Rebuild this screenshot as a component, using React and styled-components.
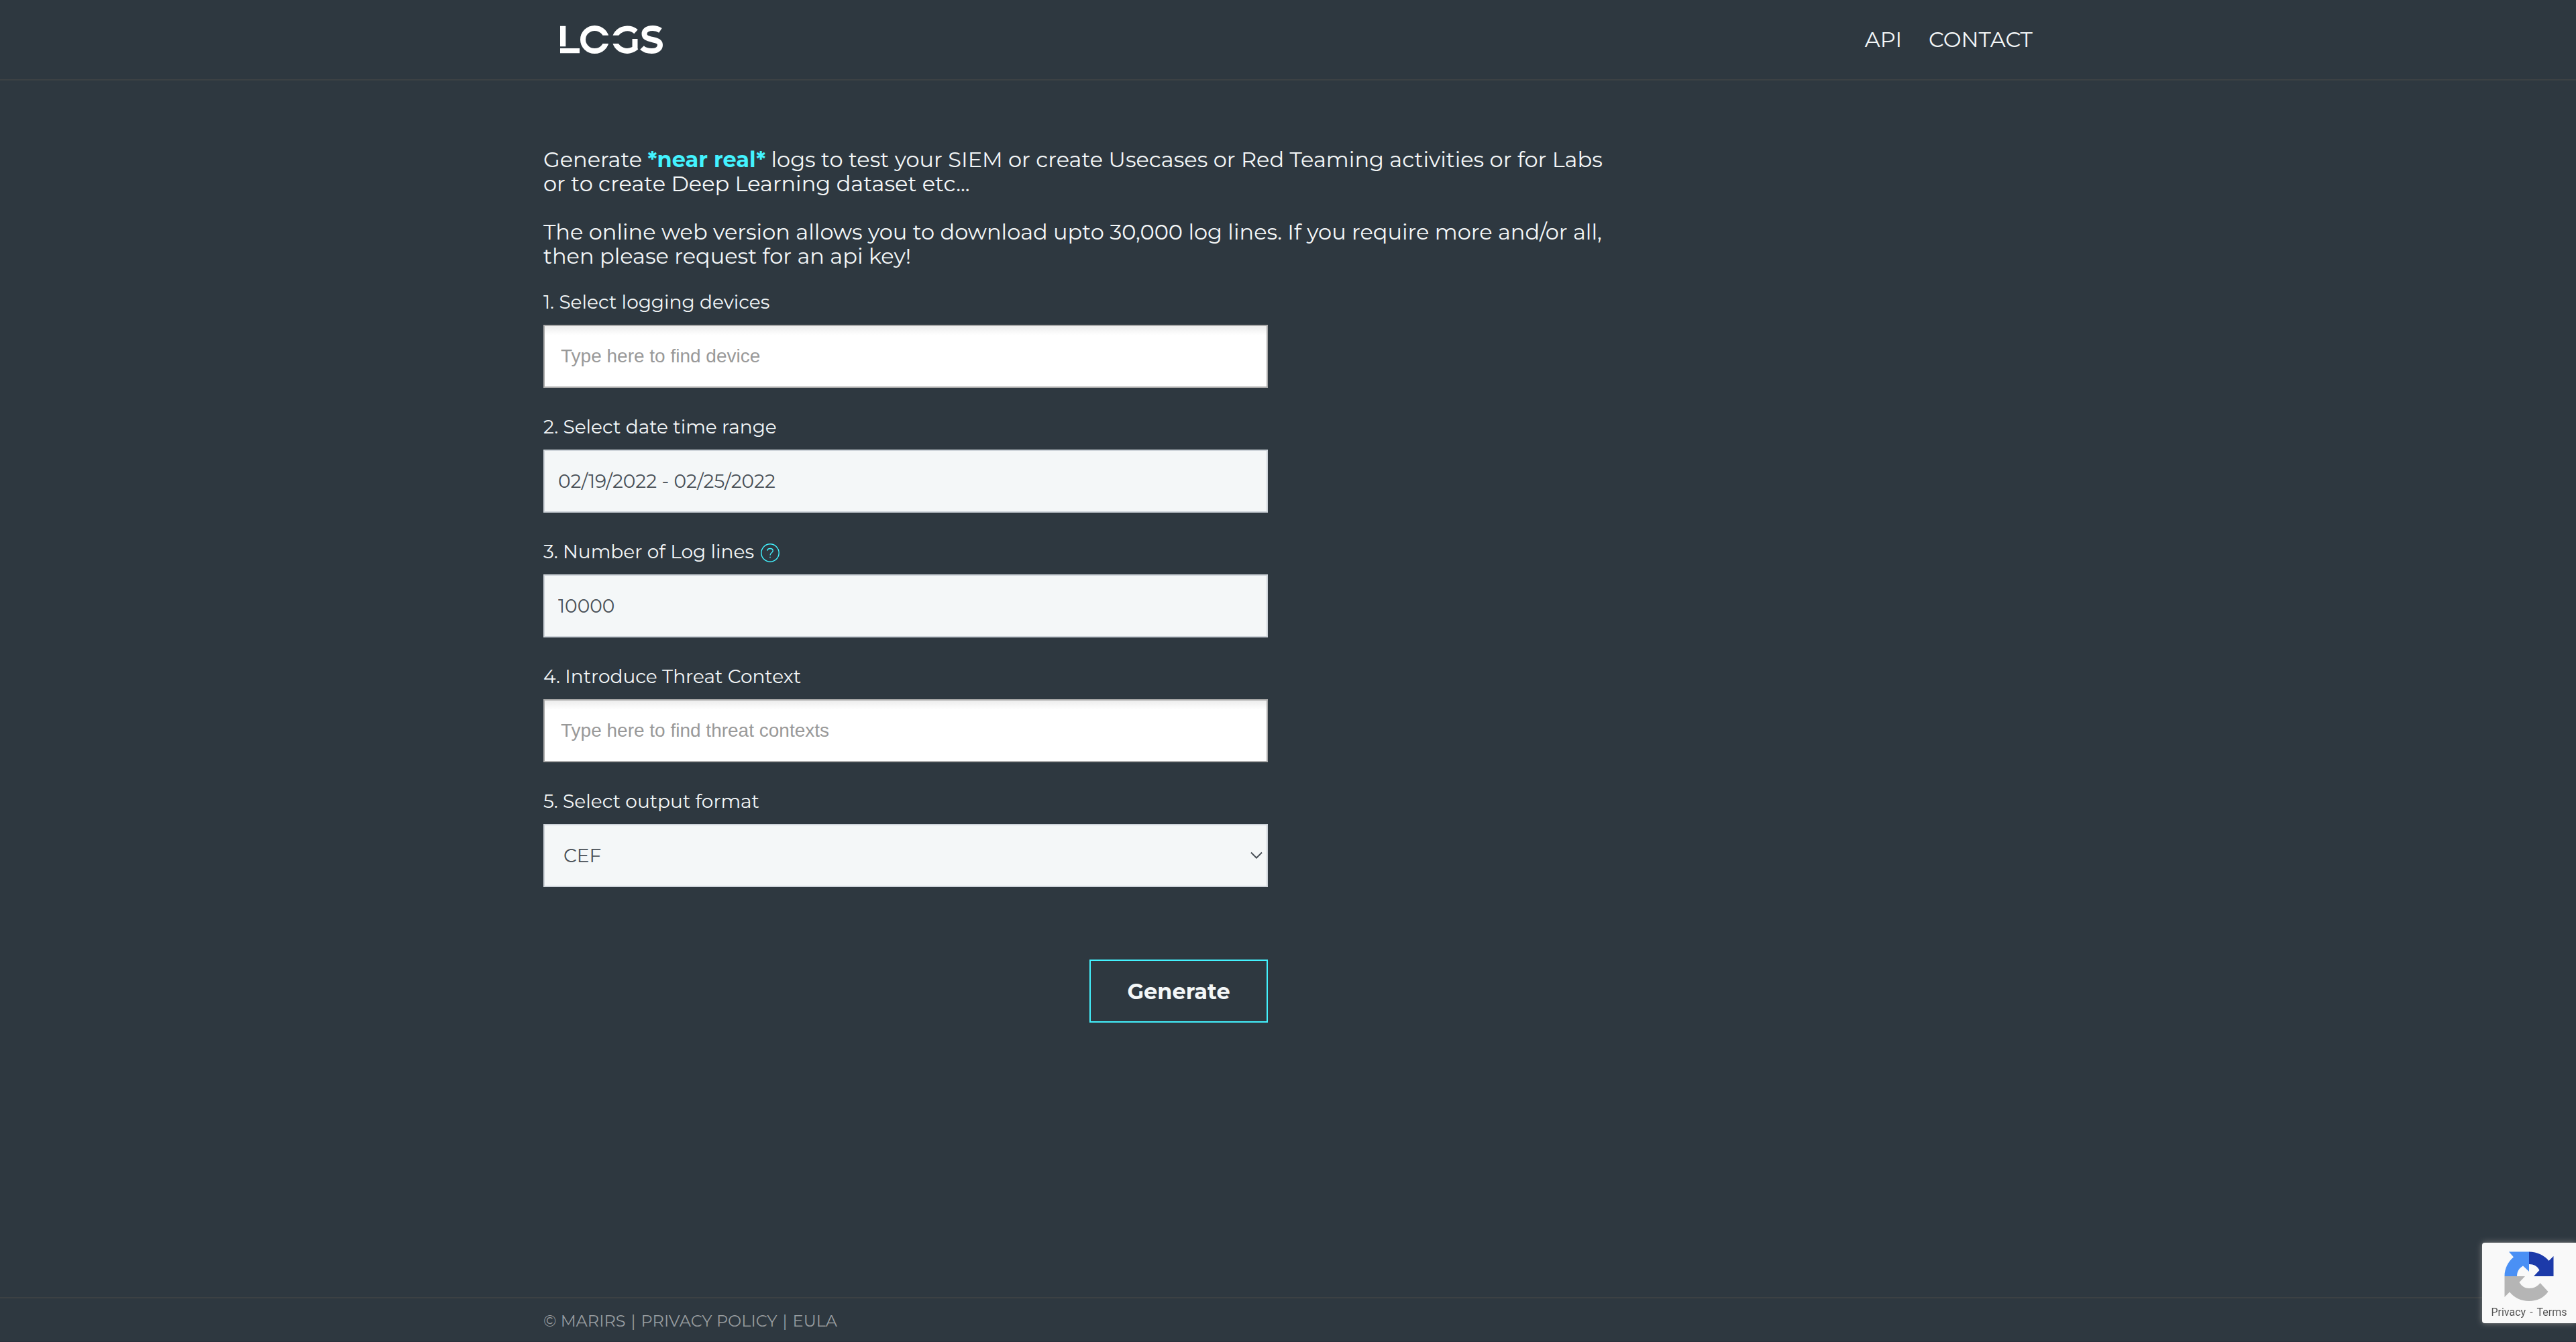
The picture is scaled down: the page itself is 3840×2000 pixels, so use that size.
import React, { useState } from "react";
import styled, { createGlobalStyle } from "styled-components";

const sans = `Montserrat, Inter, "Open Sans", sans-serif`;
const arial = `"Liberation Sans", Arial, sans-serif`;

const GlobalStyle = createGlobalStyle`
  *, *::before, *::after { box-sizing: border-box; }
  body {
    margin: 0;
    background: #2e3840;
    color: #f4f7f8;
    font-family: ${sans};
  }
`;

const Page = styled.div`
  min-height: 100vh;
  display: flex;
  flex-direction: column;
  border-bottom: 1px solid #2b303c;
`;

const Container = styled.div`
  width: 100%;
  max-width: 2280px;
  margin: 0 auto;
  padding: 0 30px;
`;

const Header = styled.header`
  border-bottom: 2px solid #3c4144;
`;

const HeaderBar = styled(Container)`
  height: 118px;
  display: flex;
  align-items: center;
  justify-content: space-between;
`;

const LogoLink = styled.a`
  display: block;
  padding-left: 24px;
  svg { display: block; }
`;

const Nav = styled.nav`
  display: flex;
  gap: 40px;
`;

const NavLink = styled.a`
  color: inherit;
  text-decoration: none;
  font-size: 32px;
  line-height: 40px;
`;

const Main = styled(Container).attrs({ as: "main" })`
  flex: 1;
  padding-top: 100px;
`;

const Intro = styled.p`
  max-width: 1640px;
  margin: 0 0 36px;
  font-size: 32px;
  line-height: 36px;
  &:last-of-type { margin-bottom: 30px; }
`;

const Highlight = styled.strong`
  color: #43f3ff;
  font-weight: 700;
`;

const Form = styled.form`
  max-width: 1080px;
  display: flex;
  flex-direction: column;
  gap: 38px;
`;

const Field = styled.div`
  display: flex;
  flex-direction: column;
  gap: 14px;
`;

const LabelRow = styled.div`
  display: flex;
  align-items: center;
  gap: 10px;
  height: 40px;
`;

const Label = styled.label`
  font-size: 28px;
  line-height: 40px;
`;

const HelpButton = styled.button`
  padding: 4px 0 0;
  border: 0;
  background: none;
  color: #43f3ff;
  svg { display: block; }
`;

const TextInput = styled.input`
  width: 100%;
  height: 94px;
  padding: 0 20px;
  border: 2px solid #ced4da;
  border-radius: 0;
  background: #f4f7f8;
  color: #495057;
  font-family: ${sans};
  font-size: 28px;
`;

const SearchInput = styled(TextInput)`
  padding: 0 24px;
  border-color: #aaa;
  background: linear-gradient(#eee 1%, #fff 15%);
  font-family: ${arial};
  &::placeholder { color: #999; opacity: 1; }
`;

const SelectFrame = styled.div`
  display: grid;
  align-items: center;
  > * { grid-area: 1 / 1; }
  > svg {
    justify-self: end;
    margin-right: 8px;
    pointer-events: none;
  }
`;

const Select = styled(TextInput).attrs({ as: "select" })`
  appearance: none;
  padding: 0 28px;
`;

const SubmitButton = styled.button`
  align-self: flex-end;
  width: 266px;
  height: 94px;
  margin-top: 70px;
  border: 2px solid #43f3ff;
  background: transparent;
  color: inherit;
  font-family: ${sans};
  font-size: 32px;
  font-weight: 700;
`;

const Footer = styled.footer`
  border-top: 2px solid #3c4144;
`;

const FooterBar = styled(Container)`
  height: 64px;
  padding-top: 18px;
  display: flex;
  gap: 8px;
  color: #969b9e;
  font-size: 24px;
  line-height: 32px;
`;

const FooterLink = styled.a`
  color: inherit;
  text-decoration: none;
`;

const Captcha = styled.aside`
  position: fixed;
  right: 0;
  bottom: 28px;
  width: 140px;
  height: 120px;
  padding-top: 12px;
  display: flex;
  flex-direction: column;
  align-items: center;
  gap: 6px;
  border-radius: 4px 0 0 4px;
  background: #f9f9f9;
  box-shadow: 0 0 10px #808080;
  color: #555;
  font-family: Roboto, sans-serif;
  font-size: 16px;
  line-height: 20px;
`;

const CaptchaLinks = styled.div`
  display: flex;
  gap: 6px;
  a { color: inherit; text-decoration: none; }
`;

function Logo() {
  return (
    <svg width="156" height="44" viewBox="0 0 156 44" role="img" aria-label="Logs">
      <defs>
        <clipPath id="ring-open-right">
          <path d="M0 0H78V15.700H52V28H78V44H0Z" />
        </clipPath>
        <clipPath id="ring-halves">
          <path d="M76 0H120V15.700H76ZM76 28H120V44H76Z" />
        </clipPath>
      </defs>
      <path fill="#fff" d="M1 1.700H9.300V32.300H1ZM1 35H30V42.300H1Z" />
      <g fill="none" stroke="#fff" strokeWidth="8">
        <ellipse cx="52.500" cy="22" rx="17.500" ry="17" clipPath="url(#ring-open-right)" />
        <g clipPath="url(#ring-halves)">
          <path d="M82.500 22A18.500 17 0 0 1 114 10.300" />
          <path d="M82.500 22A18.500 17 0 0 0 114.500 33.500" />
        </g>
        <path d="M112.500 36.500V21" />
        <path d="M150.500 8.300C147 6 143 5 139 5C131 5 126.500 8.500 126.500 13.500C126.500 19 131 20.300 138.500 22C146 23.700 150 25 150 30C150 35.500 145 39 137.500 39C131.500 39 126 37 123 34" />
      </g>
    </svg>
  );
}

function HelpIcon() {
  return (
    <svg width="28" height="28" viewBox="0 0 28 28" fill="none" stroke="currentColor" strokeWidth="1.400">
      <circle cx="14" cy="14" r="13.200" />
      <path d="M9.800 10.800C10 6.400 18.200 6.400 18.200 10.800C18.200 14 14 13.600 14 17.500" />
      <path d="M14 19.800V21.300" />
    </svg>
  );
}

function Chevron() {
  return (
    <svg width="18" height="12" viewBox="0 0 18 12" fill="none" stroke="#495057" strokeWidth="2">
      <path d="M1 1.500L9 9.500L17 1.500" />
    </svg>
  );
}

function CaptchaLogo() {
  return (
    <svg width="74" height="76" viewBox="0 0 74 76" aria-hidden="true">
      <path fill="#1c3aa9" d="M37 1.500C49 1.500 60 7 66.500 15L73.500 8V38H44L52.500 29C49.500 23 44 20 37 20Z" />
      <path fill="#4a90f5" d="M37 1.500V31L28 22.500C22 26 19 31 19 38H.5C.5 26 6 16 14 9.500L7 1.500Z" />
      <path fill="#b5b5b5" d="M.5 38H31L22.500 47C26 53 31 56 37 56C45 56 50 52.500 53.500 48L65.500 61C59 70 49 75 37 75C25 75 15 70 8 61.500L.5 69Z" />
    </svg>
  );
}

export default function App() {
  const [range, setRange] = useState("02/19/2022 - 02/25/2022");
  const [lines, setLines] = useState("10000");

  return (
    <>
      <GlobalStyle />
      <Page>
        <Header>
          <HeaderBar>
            <LogoLink href="#"><Logo /></LogoLink>
            <Nav>
              <NavLink href="#api">API</NavLink>
              <NavLink href="#contact">CONTACT</NavLink>
            </Nav>
          </HeaderBar>
        </Header>

        <Main>
          <Intro>
            Generate <Highlight>*near real*</Highlight> logs to test your SIEM or create Usecases or Red
            Teaming activities or for Labs
            <br />
            or to create Deep Learning dataset etc...
          </Intro>
          <Intro>
            The online web version allows you to download upto 30,000 log lines. If you require more and/or all,
            <br />
            then please request for an api key!
          </Intro>

          <Form onSubmit={(e) => e.preventDefault()}>
            <Field>
              <LabelRow><Label htmlFor="devices">1. Select logging devices</Label></LabelRow>
              <SearchInput id="devices" type="text" placeholder="Type here to find device" />
            </Field>
            <Field>
              <LabelRow><Label htmlFor="range">2. Select date time range</Label></LabelRow>
              <TextInput id="range" type="text" value={range} onChange={(e) => setRange(e.target.value)} />
            </Field>
            <Field>
              <LabelRow>
                <Label htmlFor="lines">3. Number of Log lines</Label>
                <HelpButton type="button" aria-label="Help"><HelpIcon /></HelpButton>
              </LabelRow>
              <TextInput id="lines" type="text" value={lines} onChange={(e) => setLines(e.target.value)} />
            </Field>
            <Field>
              <LabelRow><Label htmlFor="threats">4. Introduce Threat Context</Label></LabelRow>
              <SearchInput id="threats" type="text" placeholder="Type here to find threat contexts" />
            </Field>
            <Field>
              <LabelRow><Label htmlFor="format">5. Select output format</Label></LabelRow>
              <SelectFrame>
                <Select id="format" defaultValue="CEF">
                  <option>CEF</option>
                </Select>
                <Chevron />
              </SelectFrame>
            </Field>
            <SubmitButton type="submit">Generate</SubmitButton>
          </Form>
        </Main>

        <Footer>
          <FooterBar>
            <span>© MARIRS</span>
            <span>|</span>
            <FooterLink href="#privacy">PRIVACY POLICY</FooterLink>
            <span>|</span>
            <FooterLink href="#eula">EULA</FooterLink>
          </FooterBar>
        </Footer>
      </Page>

      <Captcha>
        <CaptchaLogo />
        <CaptchaLinks>
          <a href="#captcha-privacy">Privacy</a>
          <span>-</span>
          <a href="#captcha-terms">Terms</a>
        </CaptchaLinks>
      </Captcha>
    </>
  );
}
